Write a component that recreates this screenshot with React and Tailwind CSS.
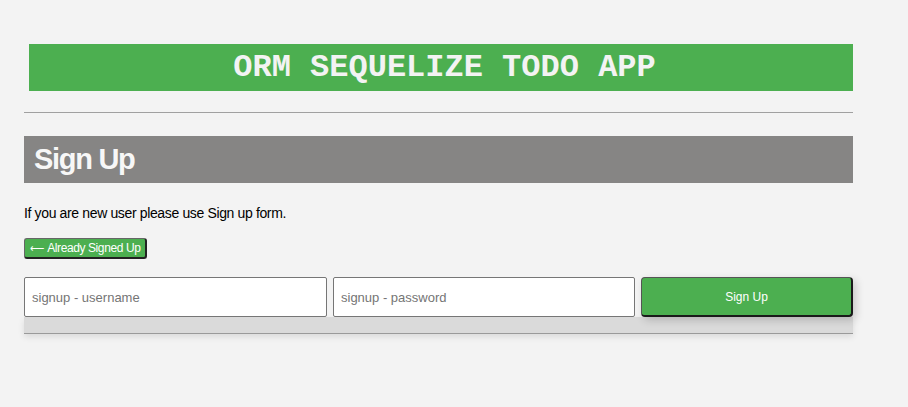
export default function App() {
  return (
    <div className="min-h-screen bg-[#f3f3f3] font-['Liberation_Sans',Arial,sans-serif]">
      <div className="w-[829px] ml-[24px] pt-[44px]">
        <div className="ml-[5px] h-[47px] bg-[#4caf50] flex items-center justify-center">
          <h1 className="font-['Liberation_Mono','Courier_New',monospace] font-bold text-[32px] leading-none text-[#f3f3f3] pl-[7px]">
            ORM SEQUELIZE TODO APP
          </h1>
        </div>

        <div className="mt-[21px] h-px bg-[#a0a0a0]" />

        <div className="mt-[23px] h-[47px] bg-[#868584] flex items-center pl-[10px]">
          <h2 className="text-[29px] font-bold text-[#f7f7f7] tracking-[-1.3px] leading-none">Sign Up</h2>
        </div>

        <p className="mt-[22px] text-[14px] leading-4 tracking-[-0.36px] text-black">
          If you are new user please use Sign up form.
        </p>

        <button className="mt-[17px] h-[21px] w-[123px] flex items-center justify-center gap-[4px] bg-[#4caf50] text-white text-[12px] tracking-[-0.4px] rounded-[3px] border border-[#666] border-r-2 border-b-2 border-r-[#222] border-b-[#222]">
          <span className="text-[10px]">⟵</span>
          <span>Already Signed Up</span>
        </button>

        <div className="mt-[18px] flex gap-[6px]">
          <input
            className="h-[40px] w-[303px] bg-white border border-[#767676] rounded-[2px] px-[7px] text-[13px] outline-none placeholder:text-[#757575]"
            placeholder="signup - username"
          />
          <input
            className="h-[40px] w-[302px] bg-white border border-[#767676] rounded-[2px] px-[7px] text-[13px] outline-none placeholder:text-[#757575]"
            placeholder="signup - password"
          />
          <button className="h-[40px] w-[212px] bg-[#4caf50] text-white text-[12px] rounded-[4px] border border-[#555] border-b-2 border-r-2 border-b-[#1a1a1a] border-r-[#1a1a1a] shadow-[3px_3px_8px_rgba(0,0,0,0.18)]">
            Sign Up
          </button>
        </div>
        <div className="h-[17px] bg-[#dadada] border-b border-[#9a9a9a] shadow-[0_3px_6px_rgba(0,0,0,0.1)]" />
      </div>
    </div>
  );
}
